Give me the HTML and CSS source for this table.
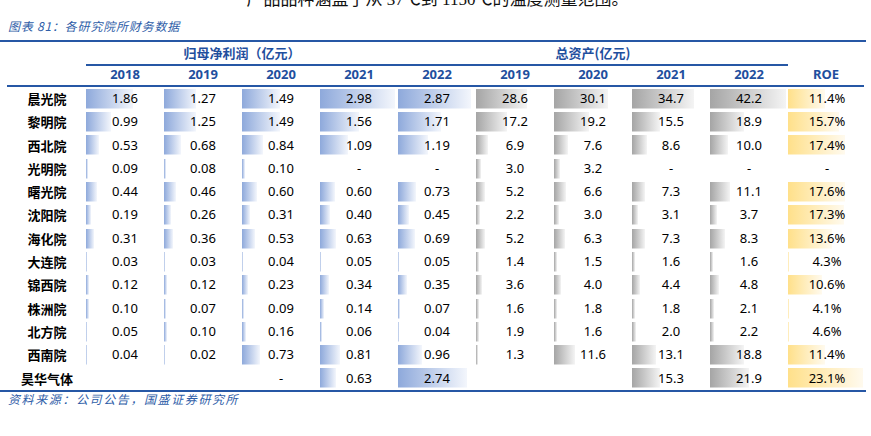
FILE: index.html
```html
<!DOCTYPE html>
<html lang="zh-CN">
<head>
<meta charset="utf-8">
<title>各研究院所财务数据</title>
<link rel="stylesheet" href="styles.css">
</head>
<body>
<div class="intro">产品品种涵盖了从 37℃到 1150℃的温度测量范围。</div>
<div class="caption">图表 81：各研究院所财务数据</div>
<div class="table">
  <div class="row group-row">
    <div></div>
    <div class="group g1">归母净利润（亿元）</div>
    <div class="group g2">总资产(亿元)</div>
    <div></div>
  </div>
  <div class="row year-row">
    <div></div>
    <div class="hd">2018</div><div class="hd">2019</div><div class="hd">2020</div><div class="hd">2021</div><div class="hd">2022</div>
    <div class="hd">2019</div><div class="hd">2020</div><div class="hd">2021</div><div class="hd">2022</div>
    <div class="hd">ROE</div>
  </div>

  <div class="row data">
    <div class="name">晨光院</div>
    <div class="c b" style="--w:47px">1.86</div><div class="c b" style="--w:32px">1.27</div><div class="c b" style="--w:38px">1.49</div><div class="c b" style="--w:75px">2.98</div><div class="c b" style="--w:73px">2.87</div>
    <div class="c g" style="--w:51px">28.6</div><div class="c g" style="--w:54px">30.1</div><div class="c g" style="--w:62px">34.7</div><div class="c g" style="--w:76px">42.2</div>
    <div class="c y" style="--w:37px">11.4%</div>
  </div>
  <div class="row data">
    <div class="name">黎明院</div>
    <div class="c b" style="--w:25px">0.99</div><div class="c b" style="--w:32px">1.25</div><div class="c b" style="--w:38px">1.49</div><div class="c b" style="--w:39px">1.56</div><div class="c b" style="--w:43px">1.71</div>
    <div class="c g" style="--w:31px">17.2</div><div class="c g" style="--w:35px">19.2</div><div class="c g" style="--w:28px">15.5</div><div class="c g" style="--w:34px">18.9</div>
    <div class="c y" style="--w:51px">15.7%</div>
  </div>
  <div class="row data">
    <div class="name">西北院</div>
    <div class="c b" style="--w:13px">0.53</div><div class="c b" style="--w:17px">0.68</div><div class="c b" style="--w:21px">0.84</div><div class="c b" style="--w:28px">1.09</div><div class="c b" style="--w:30px">1.19</div>
    <div class="c g" style="--w:12px">6.9</div><div class="c g" style="--w:14px">7.6</div><div class="c g" style="--w:15px">8.6</div><div class="c g" style="--w:18px">10.0</div>
    <div class="c y" style="--w:57px">17.4%</div>
  </div>
  <div class="row data">
    <div class="name">光明院</div>
    <div class="c b" style="--w:2px">0.09</div><div class="c b" style="--w:2px">0.08</div><div class="c b" style="--w:3px">0.10</div><div class="c">-</div><div class="c">-</div>
    <div class="c g" style="--w:5px">3.0</div><div class="c g" style="--w:6px">3.2</div><div class="c">-</div><div class="c">-</div>
    <div class="c">-</div>
  </div>
  <div class="row data">
    <div class="name">曙光院</div>
    <div class="c b" style="--w:11px">0.44</div><div class="c b" style="--w:12px">0.46</div><div class="c b" style="--w:15px">0.60</div><div class="c b" style="--w:15px">0.60</div><div class="c b" style="--w:18px">0.73</div>
    <div class="c g" style="--w:9px">5.2</div><div class="c g" style="--w:12px">6.6</div><div class="c g" style="--w:13px">7.3</div><div class="c g" style="--w:20px">11.1</div>
    <div class="c y" style="--w:57px">17.6%</div>
  </div>
  <div class="row data">
    <div class="name">沈阳院</div>
    <div class="c b" style="--w:5px">0.19</div><div class="c b" style="--w:7px">0.26</div><div class="c b" style="--w:8px">0.31</div><div class="c b" style="--w:10px">0.40</div><div class="c b" style="--w:11px">0.45</div>
    <div class="c g" style="--w:4px">2.2</div><div class="c g" style="--w:5px">3.0</div><div class="c g" style="--w:6px">3.1</div><div class="c g" style="--w:7px">3.7</div>
    <div class="c y" style="--w:56px">17.3%</div>
  </div>
  <div class="row data">
    <div class="name">海化院</div>
    <div class="c b" style="--w:8px">0.31</div><div class="c b" style="--w:9px">0.36</div><div class="c b" style="--w:13px">0.53</div><div class="c b" style="--w:16px">0.63</div><div class="c b" style="--w:17px">0.69</div>
    <div class="c g" style="--w:9px">5.2</div><div class="c g" style="--w:11px">6.3</div><div class="c g" style="--w:13px">7.3</div><div class="c g" style="--w:15px">8.3</div>
    <div class="c y" style="--w:44px">13.6%</div>
  </div>
  <div class="row data">
    <div class="name">大连院</div>
    <div class="c b" style="--w:1px">0.03</div><div class="c b" style="--w:1px">0.03</div><div class="c b" style="--w:1px">0.04</div><div class="c b" style="--w:1px">0.05</div><div class="c b" style="--w:1px">0.05</div>
    <div class="c g" style="--w:3px">1.4</div><div class="c g" style="--w:3px">1.5</div><div class="c g" style="--w:3px">1.6</div><div class="c g" style="--w:3px">1.6</div>
    <div class="c y" style="--w:1px">4.3%</div>
  </div>
  <div class="row data">
    <div class="name">锦西院</div>
    <div class="c b" style="--w:3px">0.12</div><div class="c b" style="--w:3px">0.12</div><div class="c b" style="--w:6px">0.23</div><div class="c b" style="--w:9px">0.34</div><div class="c b" style="--w:9px">0.35</div>
    <div class="c g" style="--w:6px">3.6</div><div class="c g" style="--w:7px">4.0</div><div class="c g" style="--w:8px">4.4</div><div class="c g" style="--w:9px">4.8</div>
    <div class="c y" style="--w:34px">10.6%</div>
  </div>
  <div class="row data">
    <div class="name">株洲院</div>
    <div class="c b" style="--w:3px">0.10</div><div class="c b" style="--w:2px">0.07</div><div class="c b" style="--w:2px">0.09</div><div class="c b" style="--w:4px">0.14</div><div class="c b" style="--w:2px">0.07</div>
    <div class="c g" style="--w:3px">1.6</div><div class="c g" style="--w:3px">1.8</div><div class="c g" style="--w:3px">1.8</div><div class="c g" style="--w:4px">2.1</div>
    <div class="c y" style="--w:1px">4.1%</div>
  </div>
  <div class="row data">
    <div class="name">北方院</div>
    <div class="c b" style="--w:1px">0.05</div><div class="c b" style="--w:3px">0.10</div><div class="c b" style="--w:4px">0.16</div><div class="c b" style="--w:2px">0.06</div><div class="c b" style="--w:1px">0.04</div>
    <div class="c g" style="--w:3px">1.9</div><div class="c g" style="--w:3px">1.6</div><div class="c g" style="--w:4px">2.0</div><div class="c g" style="--w:4px">2.2</div>
    <div class="c y" style="--w:1px">4.6%</div>
  </div>
  <div class="row data">
    <div class="name">西南院</div>
    <div class="c b" style="--w:1px">0.04</div><div class="c b" style="--w:1px">0.02</div><div class="c b" style="--w:18px">0.73</div><div class="c b" style="--w:20px">0.81</div><div class="c b" style="--w:24px">0.96</div>
    <div class="c g" style="--w:2px">1.3</div><div class="c g" style="--w:21px">11.6</div><div class="c g" style="--w:24px">13.1</div><div class="c g" style="--w:34px">18.8</div>
    <div class="c y" style="--w:37px">11.4%</div>
  </div>
  <div class="row data">
    <div class="name">昊华气体</div>
    <div class="c"></div><div class="c"></div><div class="c">-</div><div class="c b" style="--w:16px">0.63</div><div class="c b" style="--w:69px">2.74</div>
    <div class="c"></div><div class="c"></div><div class="c g" style="--w:28px">15.3</div><div class="c g" style="--w:39px">21.9</div>
    <div class="c y" style="--w:75px">23.1%</div>
  </div>
</div>
<div class="source">资料来源：公司公告，国盛证券研究所</div>
</body>
</html>
```
FILE: styles.css
```css
html, body {
  margin: 0;
  padding: 0;
  background: #ffffff;
}

body {
  font-family: "Noto Sans", "Noto Sans CJK SC", sans-serif;
  color: #000000;
  width: 871px;
  overflow: hidden;
}

.intro {
  font-family: "Liberation Serif", "Noto Sans CJK SC", serif;
  font-size: 17px;
  line-height: 0;
  text-align: center;
  padding-left: 4px;
  padding-bottom: 19px;
  color: #111111;
}

.caption {
  font-family: "Noto Sans CJK SC", sans-serif;
  font-size: 12px;
  line-height: 14px;
  font-style: italic;
  color: #2f5ea8;
  letter-spacing: 0.8px;
  padding-left: 8px;
  margin-bottom: 7px;
}

.table {
  width: 866px;
  border-top: 2px solid #2657a5;
  border-bottom: 2px solid #2657a5;
}

.row {
  display: grid;
  grid-template-columns: 86px repeat(10, 78px);
}

.group-row {
  height: 22px;
}

.group {
  font-family: "Noto Sans CJK SC", sans-serif;
  font-weight: 700;
  font-size: 13px;
  line-height: 22px;
  color: #1f4f9e;
  text-align: center;
  border-bottom: 2px solid #2657a5;
}

.g1 {
  grid-column: span 4;
}

.g2 {
  grid-column: span 5;
}

.year-row {
  height: 21px;
  margin-left: 7px;
  margin-right: 2px;
  grid-template-columns: 79px repeat(9, 78px) 76px;
  border-bottom: 2px solid #2657a5;
}

.hd {
  font-weight: 700;
  font-size: 13px;
  line-height: 21px;
  color: #1f4f9e;
  text-align: center;
}

.data {
  height: 23.3px;
}

.name {
  font-family: "Noto Sans CJK SC", sans-serif;
  font-weight: 700;
  font-size: 13px;
  line-height: 23.3px;
  text-align: center;
  padding-left: 8px;
}

.c {
  font-size: 13px;
  line-height: 23.3px;
  text-align: center;
  background-repeat: no-repeat;
  background-position: 0 50%;
  background-size: var(--w, 0px) 19.5px;
}

.b {
  background-image: linear-gradient(to right, #8ea9db, #f3f6fc);
}

.g {
  background-image: linear-gradient(to right, #a5a5a5, #f4f4f4);
}

.y {
  background-image: linear-gradient(to right, #ffe08a, #fffaee);
}

.source {
  font-family: "Noto Sans CJK SC", sans-serif;
  font-size: 12px;
  line-height: 14px;
  font-style: italic;
  color: #2f5ea8;
  letter-spacing: 1.6px;
  padding-left: 8px;
}
```
